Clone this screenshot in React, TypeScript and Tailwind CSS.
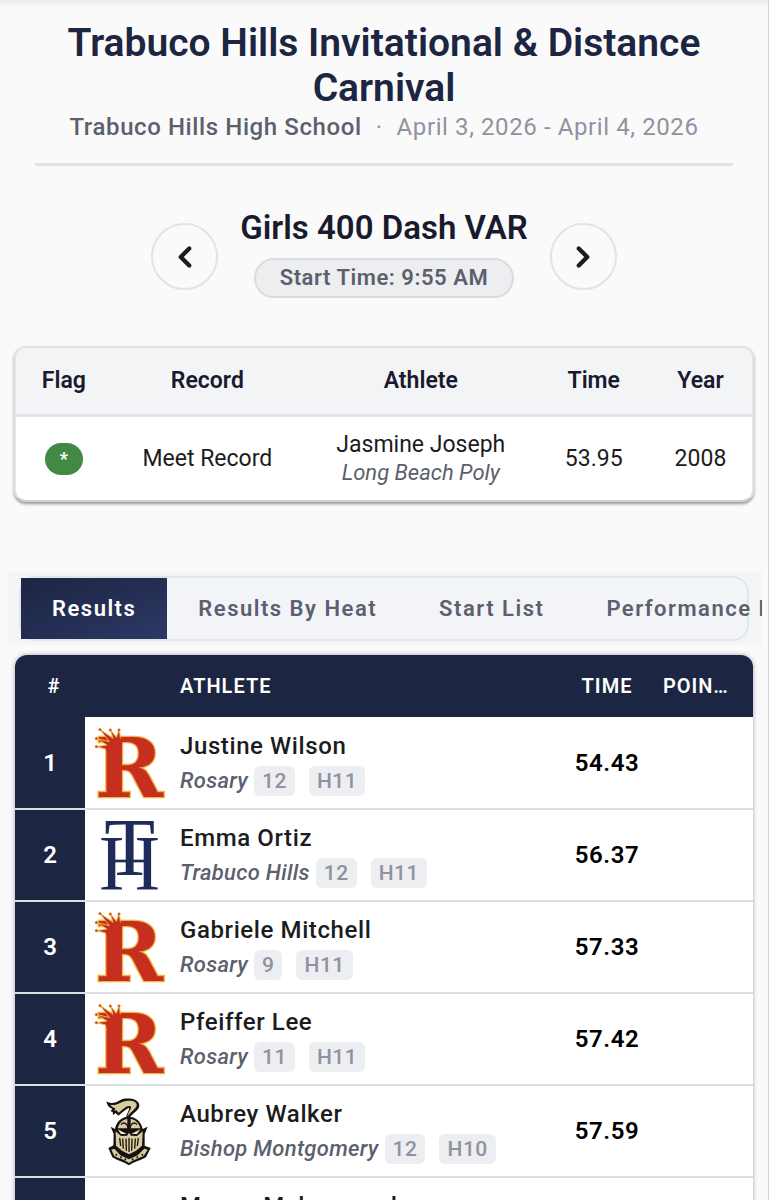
import { useState } from "react";
import { ChevronLeft, ChevronRight } from "lucide-react";

type School = "rosary" | "trabuco" | "bishop";

type Result = {
  place: number;
  name: string;
  school: string;
  logo?: School;
  grade: string;
  heat: string;
  time: string;
};

const tabs = ["Results", "Results By Heat", "Start List", "Performance List"];

const results: Result[] = [
  { place: 1, name: "Justine Wilson", school: "Rosary", logo: "rosary", grade: "12", heat: "H11", time: "54.43" },
  { place: 2, name: "Emma Ortiz", school: "Trabuco Hills", logo: "trabuco", grade: "12", heat: "H11", time: "56.37" },
  { place: 3, name: "Gabriele Mitchell", school: "Rosary", logo: "rosary", grade: "9", heat: "H11", time: "57.33" },
  { place: 4, name: "Pfeiffer Lee", school: "Rosary", logo: "rosary", grade: "11", heat: "H11", time: "57.42" },
  { place: 5, name: "Aubrey Walker", school: "Bishop Montgomery", logo: "bishop", grade: "12", heat: "H10", time: "57.59" },
  { place: 6, name: "Megan Mahommad", school: "Unattached", grade: "10", heat: "H10", time: "57.81" },
];

function RosaryLogo() {
  return (
    <svg viewBox="0 5 270 270" className="size-[90px]" aria-hidden="true">
      <text
        x="30"
        y="243"
        fontSize="246"
        fontWeight="700"
        fill="#c62f20"
        stroke="#f0b540"
        strokeWidth="8"
        paintOrder="stroke"
        className="font-['DejaVu_Serif',serif]"
      >
        R
      </text>
      {/* crown */}
      <path
        d="M66 116 L62 98 L34 91 L66 86 L34 66 L73 76 L45 39 L84 66 L76 40 L94 63 L103 38 L106 68 L100 96 Z"
        fill="#c62f20"
        stroke="#f0b540"
        strokeWidth="3"
      />
      <path d="M66 122 L64 97 L84 72 L104 64 L112 70 L110 122 Z" fill="#c62f20" />
      <g fill="#c62f20" stroke="#f0b540" strokeWidth="2">
        <circle cx="34" cy="91" r="4" />
        <circle cx="34" cy="67" r="4" />
        <circle cx="45" cy="40" r="4" />
        <circle cx="76" cy="41" r="4" />
        <circle cx="102" cy="41" r="4" />
      </g>
    </svg>
  );
}

function TrabucoLogo() {
  return (
    <svg viewBox="0 0 270 270" className="size-[90px]" aria-hidden="true">
      <g fill="#1f2b58" textAnchor="middle" className="font-['Liberation_Serif',serif]">
        <text x="134" y="194" fontSize="250">T</text>
        <text x="80" y="237" fontSize="236">I</text>
        <text x="187" y="237" fontSize="236">I</text>
        <rect x="88" y="149" width="92" height="8" />
      </g>
    </svg>
  );
}

function BishopLogo() {
  return (
    <svg viewBox="0 -8 270 270" className="size-[90px]" aria-hidden="true">
      {/* plume */}
      <path
        d="M64 38 C78 48 94 42 112 31 C136 27 160 31 163 49 C164 67 142 71 132 91 L123 91 C123 76 134 66 132 57 C119 63 111 72 100 81 L92 73 L84 79 C83 72 86 69 76 68 L82 61 C72 58 66 50 64 38 Z"
        fill="#15130f"
      />
      <path
        d="M76 48 C94 54 106 38 124 37 C144 34 157 41 155 51 C152 62 134 70 128 84 C127 70 143 60 136 52 C121 50 111 66 100 72 L95 65 L88 66 L91 59 C84 57 79 54 76 48 Z"
        fill="#d8cba0"
      />
      {/* collar */}
      <path d="M70 178 L86 170 L175 170 L197 178 L183 206 C165 216 146 220 132 230 C116 219 98 217 82 206 Z" fill="#15130f" />
      <path d="M79 183 L88 180 L106 200 L132 212 L158 200 L178 180 L188 183 L176 202 C159 210 146 213 132 223 C118 212 102 210 88 202 Z" fill="#d8cba0" />
      <g fill="#15130f">
        <circle cx="94" cy="198" r="3" />
        <circle cx="108" cy="206" r="3" />
        <circle cx="121" cy="212" r="3" />
        <circle cx="143" cy="212" r="3" />
        <circle cx="157" cy="206" r="3" />
        <circle cx="172" cy="198" r="3" />
      </g>
      {/* helmet */}
      <path
        d="M77 114 L90 121 C94 98 111 84 131 84 C151 84 169 98 173 121 L188 114 L179 136 L179 177 L158 194 L132 206 L106 194 L85 177 L86 136 Z"
        fill="#15130f"
      />
      <path d="M127 91 L127 119 L98 119 C102 103 112 93 127 91 Z" fill="#d8cba0" />
      <path d="M137 91 L137 119 L166 119 C162 103 151 93 137 91 Z" fill="#d8cba0" />
      <path d="M108 108 C116 98 127 104 130 120 M156 108 C148 98 137 104 134 120" stroke="#15130f" strokeWidth="4" fill="none" />
      <path
        d="M92 128 L108 142 L126 141 L132 132 L138 141 L156 142 L173 128 L171 171 L153 186 L132 197 L111 186 L93 171 Z"
        fill="#d8cba0"
      />
      <path d="M98 122 L125 136 L108 136 Z M166 122 L139 136 L156 136 Z" fill="#f2edda" />
      <path
        d="M104 148 L107 172 M113 150 L115 180 M123 150 L124 186 M132 148 L132 190 M141 150 L140 186 M151 150 L149 180 M160 148 L157 172"
        stroke="#15130f"
        strokeWidth="4"
      />
    </svg>
  );
}

const logos = { rosary: RosaryLogo, trabuco: TrabucoLogo, bishop: BishopLogo };

function Tag({ children }: { children: React.ReactNode }) {
  return (
    <span className="h-[30px] px-2 rounded-md bg-[#edeef1] text-[21px] leading-[30px] font-medium tracking-wide text-[#9092a0]">
      {children}
    </span>
  );
}

export default function App() {
  const [activeTab, setActiveTab] = useState("Results");

  return (
    <main
      className="
        h-screen overflow-hidden
        border-r border-[#d4d4d8]
        bg-[#fafafa]
        font-['Roboto',sans-serif] text-[#1c1c1e]
      "
    >
      <div className="h-2 bg-linear-to-b from-[#ebebec] to-[#fafafa]" />

      {/* Meet header */}
      <header className="mx-[35px] pt-[13px] pb-5 border-b-3 border-[#e2e3ea] text-center">
        <h1 className="text-[39px] leading-[45px] font-semibold text-[#1c2541]">
          Trabuco Hills Invitational &amp; Distance Carnival
        </h1>
        <p className="text-[24px] leading-8 tracking-wide text-[#9092a0]">
          <span className="font-medium text-[#5c5f6e]">Trabuco Hills High School</span>
          <span className="mx-3.5">·</span>
          <span>April 3, 2026 - April 4, 2026</span>
        </p>
      </header>

      {/* Event switcher */}
      <section className="mt-[41px] flex items-center justify-center gap-[22px]">
        <button
          type="button"
          aria-label="Previous event"
          className="mt-2 size-[67px] flex items-center justify-center rounded-full border-2 border-[#e2e3ea]"
        >
          <ChevronLeft className="size-[34px]" strokeWidth={3} />
        </button>
        <div className="flex flex-col items-center gap-2.5">
          <h2 className="text-[33px] leading-[41px] font-semibold text-[#1a1a2e]">
            Girls 400 Dash VAR
          </h2>
          <p className="h-10 px-6 rounded-full border-2 border-[#d9dbe0] bg-[#edeef0] text-[22px] leading-9 font-semibold tracking-wide text-[#5c5f6e]">
            Start Time: 9:55 AM
          </p>
        </div>
        <button
          type="button"
          aria-label="Next event"
          className="mt-2 size-[67px] flex items-center justify-center rounded-full border-2 border-[#e2e3ea]"
        >
          <ChevronRight className="size-[34px]" strokeWidth={3} />
        </button>
      </section>

      {/* Records */}
      <section className="mx-3.5 mt-12 overflow-hidden rounded-xl border-2 border-[#e2e3ea] border-b-[#d0d1d6] bg-white shadow-[0_2px_3px_rgba(0,0,0,0.4)]">
        <table className="w-full table-fixed text-center text-[23px]">
          <thead className="bg-[#f3f4f6] text-[#1a1a2e]">
            <tr className="h-[67px] border-b-3 border-[#e2e3ea]">
              <th className="w-[13%] font-semibold">Flag</th>
              <th className="w-[26%] font-semibold">Record</th>
              <th className="w-[32%] font-semibold">Athlete</th>
              <th className="w-[15%] font-semibold">Time</th>
              <th className="w-[14%] font-semibold">Year</th>
            </tr>
          </thead>
          <tbody>
            <tr className="h-[85px]">
              <td>
                <span className="inline-block h-8 w-[38px] rounded-full bg-[#418944] align-middle text-[18px] leading-8 font-bold text-white">
                  *
                </span>
              </td>
              <td className="pt-0.5">Meet Record</td>
              <td className="pt-0.5 leading-7">
                Jasmine Joseph
                <div className="text-[22px] italic text-[#5c5f6e]">Long Beach Poly</div>
              </td>
              <td className="pt-0.5">53.95</td>
              <td className="pt-0.5">2008</td>
            </tr>
          </tbody>
        </table>
      </section>

      {/* Tabs */}
      <nav className="ml-2 mr-1.5 mt-[70px] overflow-hidden bg-[#f4f5f6] py-1">
        <div role="tablist" className="mr-[13px] ml-[11px] flex h-[65px] rounded-2xl border-2 border-[#e2e5ea] bg-[#f3f4f7]">
          {tabs.map((tab) => (
            <button
              key={tab}
              type="button"
              role="tab"
              aria-selected={tab === activeTab}
              onClick={() => setActiveTab(tab)}
              className={`
                shrink-0 px-[31px]
                text-[22px] font-semibold tracking-[1.5px] whitespace-nowrap
                ${tab === activeTab ? "bg-linear-to-br from-[#1c2541] to-[#2d3866] text-white" : "text-[#5c5f6e]"}
              `}
            >
              {tab}
            </button>
          ))}
        </div>
      </nav>

      {/* Results */}
      <section className="mx-[15px] mt-2.5 overflow-hidden rounded-t-xl bg-white shadow-[0_0_4px_rgba(28,37,65,0.4)]">
        <table className="w-full table-fixed text-left">
          <thead className="bg-[#1c2541] text-[20px] tracking-wider text-white uppercase">
            <tr className="h-[62px]">
              <th className="w-[70px] pl-2 text-center font-semibold">#</th>
              <th className="w-[95px]" aria-label="Logo" />
              <th className="font-semibold">Athlete</th>
              <th className="w-[112px] text-center font-semibold">Time</th>
              <th className="w-[90px] truncate pr-6 font-semibold">Points</th>
            </tr>
          </thead>
          <tbody>
            {results.map((row) => {
              const Logo = row.logo && logos[row.logo];
              return (
                <tr key={row.place} className="h-[92px] border-b-2 border-[#dcdde2]">
                  <td className="bg-[#1c2541] text-center text-[24px] font-semibold text-white">{row.place}</td>
                  <td>{Logo && <Logo />}</td>
                  <td>
                    <div className="text-[24px] leading-8 font-medium tracking-wide whitespace-nowrap">{row.name}</div>
                    <div className="mt-1 flex items-center">
                      <span className="mr-1.5 text-[22px] leading-7 font-medium tracking-[0.3px] whitespace-nowrap text-[#5c5f6e] italic">
                        {row.school}
                      </span>
                      <Tag>{row.grade}</Tag>
                      <span className="w-3.5" />
                      <Tag>{row.heat}</Tag>
                    </div>
                  </td>
                  <td className="text-center text-[24px] font-semibold tracking-wide text-black">{row.time}</td>
                  <td />
                </tr>
              );
            })}
          </tbody>
        </table>
      </section>
    </main>
  );
}
